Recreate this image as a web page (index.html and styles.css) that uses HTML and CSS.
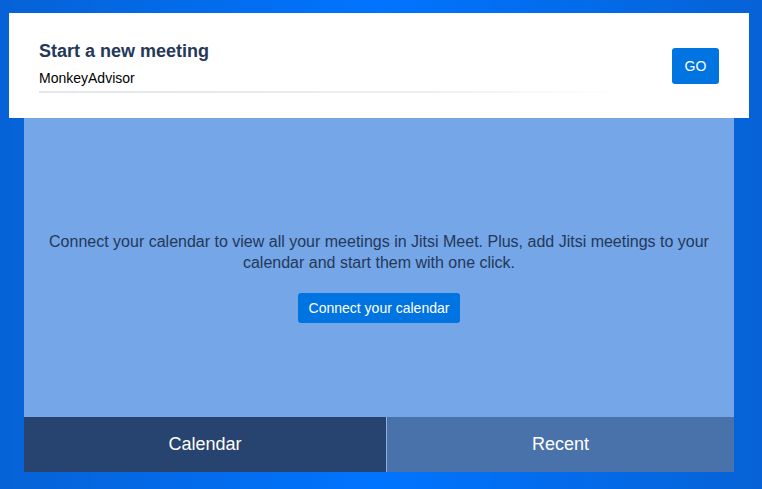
FILE: index.html
```html
<!DOCTYPE html>
<html lang="en">
<head>
    <meta charset="UTF-8">
    <meta name="viewport" content="width=device-width, initial-scale=1.0">
    <title>Jitsi Meet</title>
    <link rel="stylesheet" href="styles.css">
</head>
<body>
    <div class="header">
        <div class="entry">
            <h2>Start a new meeting</h2>
            <div class="room-name">MonkeyAdvisor</div>
        </div>
        <button class="go-btn">GO</button>
    </div>

    <div class="panel">
        <div class="panel-body">
            <p>Connect your calendar to view all your meetings in Jitsi Meet. Plus, add Jitsi meetings to your calendar and start them with one click.</p>
            <button class="connect-btn">Connect your calendar</button>
        </div>
        <div class="tabs">
            <div class="tab tab-active">Calendar</div>
            <div class="tab">Recent</div>
        </div>
    </div>
</body>
</html>
```

FILE: styles.css
```css
body {
    margin: 0;
    font-family: "Liberation Sans", Arial, sans-serif;
    background: linear-gradient(90deg, #0662d6 0%, #0074ff 50%, #0662d6 100%);
    height: 489px;
    overflow: hidden;
}
.header {
    margin: 13px 0 0 9px;
    width: 740px;
    height: 105px;
    box-sizing: border-box;
    background: #fff;
    display: flex;
    align-items: center;
    padding: 0 30px;
}
.entry {
    flex: 1;
    padding-top: 2px;
}
.entry h2 {
    margin: 0 0 8px 0;
    font-size: 18px;
    color: #253858;
}
.room-name {
    width: 580px;
    font-size: 14px;
    color: #000;
    padding-bottom: 5px;
    border-bottom: 2px solid transparent;
    border-image: linear-gradient(90deg, #e2e5ea 0%, #eceef2 65%, #ffffff 100%) 1;
}
.go-btn {
    background: #0074e0;
    color: #fff;
    border: none;
    border-radius: 3px;
    font-family: inherit;
    font-size: 14px;
    width: 47px;
    height: 36px;
}
.panel {
    margin-left: 24px;
    width: 710px;
    background: #74a6e8;
}
.panel-body {
    height: 299px;
    display: flex;
    flex-direction: column;
    align-items: center;
    justify-content: center;
    text-align: center;
    padding: 0 20px;
    box-sizing: border-box;
}
.panel-body p {
    margin: 18px 0 20px 0;
    font-size: 16px;
    line-height: 21px;
    color: #253858;
}
.connect-btn {
    background: #0074e0;
    color: #fff;
    border: none;
    border-radius: 3px;
    font-family: inherit;
    font-size: 14px;
    padding: 0 11px;
    height: 30px;
}
.tabs {
    display: flex;
    height: 55px;
}
.tab {
    display: flex;
    align-items: center;
    justify-content: center;
    color: #fff;
    font-size: 18px;
    background: #4a72aa;
    flex: 1;
}
.tab-active {
    flex: 0 0 362px;
    background: #26446f;
    border-right: 1px solid #8fb0e0;
}
```
